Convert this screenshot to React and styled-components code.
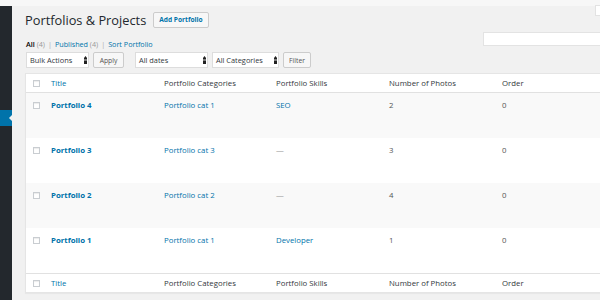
import React from "react";
import styled, { createGlobalStyle } from "styled-components";

const Global = createGlobalStyle`
  html, body { margin: 0; padding: 0; }
  body {
    background: #f1f1f1;
    font-family: "Open Sans", "Noto Sans", "Liberation Sans", sans-serif;
    color: #444;
    overflow: hidden;
  }
  * { box-sizing: border-box; }
`;

const Page = styled.div`
  width: 600px;
  height: 300px;
  display: flex;
  flex-direction: column;
  overflow: hidden;
`;

const TopStrip = styled.div`
  height: 6px;
  flex: none;
  background: #f7f7f7;
  position: relative;
`;

const ScreenTab = styled.div`
  position: absolute;
  right: 0;
  top: 5px;
  width: 5px;
  height: 11px;
  background: #fff;
  border: 1px solid #e2e2e2;
  border-right: none;
  z-index: 2;
`;

const Body = styled.div`
  flex: 1;
  display: flex;
  min-height: 0;
`;

const Sidebar = styled.div`
  width: 12px;
  flex: none;
  background: #23282d;
  padding-top: 104px;
`;

const MenuItem = styled.div`
  height: 16px;
  background: ${(p) => (p.$current ? "#0073aa" : "transparent")};
  position: relative;
  &::after {
    content: "";
    position: absolute;
    right: 0;
    top: 5px;
    border-style: solid;
    border-width: 3px 3px 3px 0;
    border-color: transparent #f1f1f1 transparent transparent;
  }
`;

const Main = styled.div`
  flex: 1;
  min-width: 0;
  padding-left: 13px;
  display: flex;
  flex-direction: column;
`;

const HeaderRow = styled.div`
  display: flex;
  align-items: center;
  gap: 7px;
  margin-top: 6px;
  height: 16px;
`;

const Title = styled.h1`
  margin: 0;
  font-size: 12.8px;
  font-weight: 400;
  color: #23282d;
  line-height: 16px;
`;

const AddButton = styled.button`
  height: 16px;
  padding: 0 5px;
  font-family: inherit;
  font-size: 6.6px;
  font-weight: 700;
  color: #0073aa;
  background: #f7f7f7;
  border: 1px solid #ccc;
  border-radius: 2px;
  line-height: 14px;
`;

const SubRow = styled.div`
  display: flex;
  justify-content: space-between;
  align-items: flex-start;
  margin-top: 4px;
  height: 20px;
`;

const SubNav = styled.div`
  padding-top: 7px;
  padding-left: 1px;
  font-size: 7.2px;
  line-height: 10px;
  color: #666;
  white-space: nowrap;
`;

const SubLink = styled.span`
  color: ${(p) => (p.$current ? "#000" : "#0073aa")};
  font-weight: ${(p) => (p.$current ? 600 : 400)};
`;

const Count = styled.span`
  color: #999;
`;

const Sep = styled.span`
  color: #aaa;
  margin: 0 3px;
`;

const SearchBox = styled.div`
  width: 117px;
  height: 14px;
  background: #fff;
  border: 1px solid #e3e3e3;
  border-right: none;
`;

const TableNav = styled.div`
  display: flex;
  align-items: center;
  height: 16px;
  padding-left: 1px;
`;

const Group = styled.div`
  display: flex;
  align-items: center;
  gap: 4px;
  margin-right: ${(p) => p.$gap || 0}px;
`;

const Select = styled.div`
  width: ${(p) => p.$w}px;
  height: 16px;
  background: #fff;
  border: 1px solid #ddd;
  display: flex;
  align-items: center;
  justify-content: space-between;
  padding: 0 1px 0 3px;
  font-size: 7.4px;
  color: #32373c;
  white-space: nowrap;
`;

const Arrow = () => (
  <svg width="3" height="8" viewBox="0 0 3 8">
    <path d="M1.5 0 L3 2 L3 8 L0 8 L0 2 Z" fill="#222" />
    <rect x="0" y="3.6" width="3" height="0.8" fill="#fff" />
  </svg>
);

const Button = styled.button`
  width: ${(p) => p.$w}px;
  height: 16px;
  padding: 0;
  font-family: inherit;
  font-size: 6.8px;
  color: #555;
  background: #f7f7f7;
  border: 1px solid #ccc;
  border-radius: 2px;
`;

const Table = styled.div`
  margin-top: 5px;
  background: #fff;
  border: 1px solid #e5e5e5;
  border-right: none;
  box-shadow: 0 1px 1px rgba(0, 0, 0, 0.04);
`;

const cols = "25px 113px 112px 113px 113px 1fr";

const HeadRow = styled.div`
  display: grid;
  grid-template-columns: ${cols};
  height: 19px;
  align-items: center;
  border-bottom: ${(p) => (p.$foot ? "none" : "1px solid #e1e1e1")};
  border-top: ${(p) => (p.$foot ? "1px solid #e1e1e1" : "none")};
  font-size: 7.8px;
  color: #32373c;
`;

const Row = styled.div`
  display: grid;
  grid-template-columns: ${cols};
  height: 45px;
  align-items: start;
  padding-top: 7px;
  background: ${(p) => (p.$alt ? "#f9f9f9" : "#fff")};
  font-size: 7.8px;
  line-height: 10px;
  color: #555;
`;

const CheckCell = styled.div`
  display: flex;
  align-items: center;
  height: 10px;
  padding-left: 7px;
`;

const Check = styled.span`
  width: 7px;
  height: 7px;
  border: 1px solid #c9cdd1;
  background: #fff;
  box-shadow: inset 0 1px 1px rgba(0, 0, 0, 0.08);
`;

const Cell = styled.div`
  white-space: nowrap;
  color: ${(p) => (p.$link ? "#0073aa" : p.$muted ? "#999" : "#555")};
  font-weight: ${(p) => (p.$bold ? 700 : 400)};
`;

const HeadCell = styled.div`
  white-space: nowrap;
  color: ${(p) => (p.$link ? "#0073aa" : "#32373c")};
`;

const rows = [
  { t: "Portfolio 4", c: "Portfolio cat 1", s: "SEO", n: "2" },
  { t: "Portfolio 3", c: "Portfolio cat 3", s: null, n: "3" },
  { t: "Portfolio 2", c: "Portfolio cat 2", s: null, n: "4" },
  { t: "Portfolio 1", c: "Portfolio cat 1", s: "Developer", n: "1" },
];

const Header = ({ foot }) => (
  <HeadRow $foot={foot}>
    <CheckCell>
      <Check />
    </CheckCell>
    <HeadCell $link>Title</HeadCell>
    <HeadCell>Portfolio Categories</HeadCell>
    <HeadCell>Portfolio Skills</HeadCell>
    <HeadCell>Number of Photos</HeadCell>
    <HeadCell>Order</HeadCell>
  </HeadRow>
);

export default function App() {
  return (
    <Page>
      <Global />
      <TopStrip>
        <ScreenTab />
      </TopStrip>
      <Body>
        <Sidebar>
          <MenuItem $current />
        </Sidebar>
        <Main>
          <HeaderRow>
            <Title>Portfolios &amp; Projects</Title>
            <AddButton>Add Portfolio</AddButton>
          </HeaderRow>
          <SubRow>
            <SubNav>
              <SubLink $current>All</SubLink> <Count>(4)</Count>
              <Sep>|</Sep>
              <SubLink>Published</SubLink> <Count>(4)</Count>
              <Sep>|</Sep>
              <SubLink>Sort Portfolio</SubLink>
            </SubNav>
            <SearchBox />
          </SubRow>
          <TableNav>
            <Group $gap={11}>
              <Select $w={63}>
                Bulk Actions <Arrow />
              </Select>
              <Button $w={31}>Apply</Button>
            </Group>
            <Group>
              <Select $w={73}>
                All dates <Arrow />
              </Select>
              <Select $w={67}>
                All Categories <Arrow />
              </Select>
              <Button $w={28}>Filter</Button>
            </Group>
          </TableNav>
          <Table>
            <Header />
            {rows.map((r, i) => (
              <Row key={r.t} $alt={i % 2 === 0}>
                <CheckCell>
                  <Check />
                </CheckCell>
                <Cell $link $bold>
                  {r.t}
                </Cell>
                <Cell $link>{r.c}</Cell>
                {r.s ? <Cell $link>{r.s}</Cell> : <Cell $muted>—</Cell>}
                <Cell>{r.n}</Cell>
                <Cell>0</Cell>
              </Row>
            ))}
            <Header foot />
          </Table>
        </Main>
      </Body>
    </Page>
  );
}
